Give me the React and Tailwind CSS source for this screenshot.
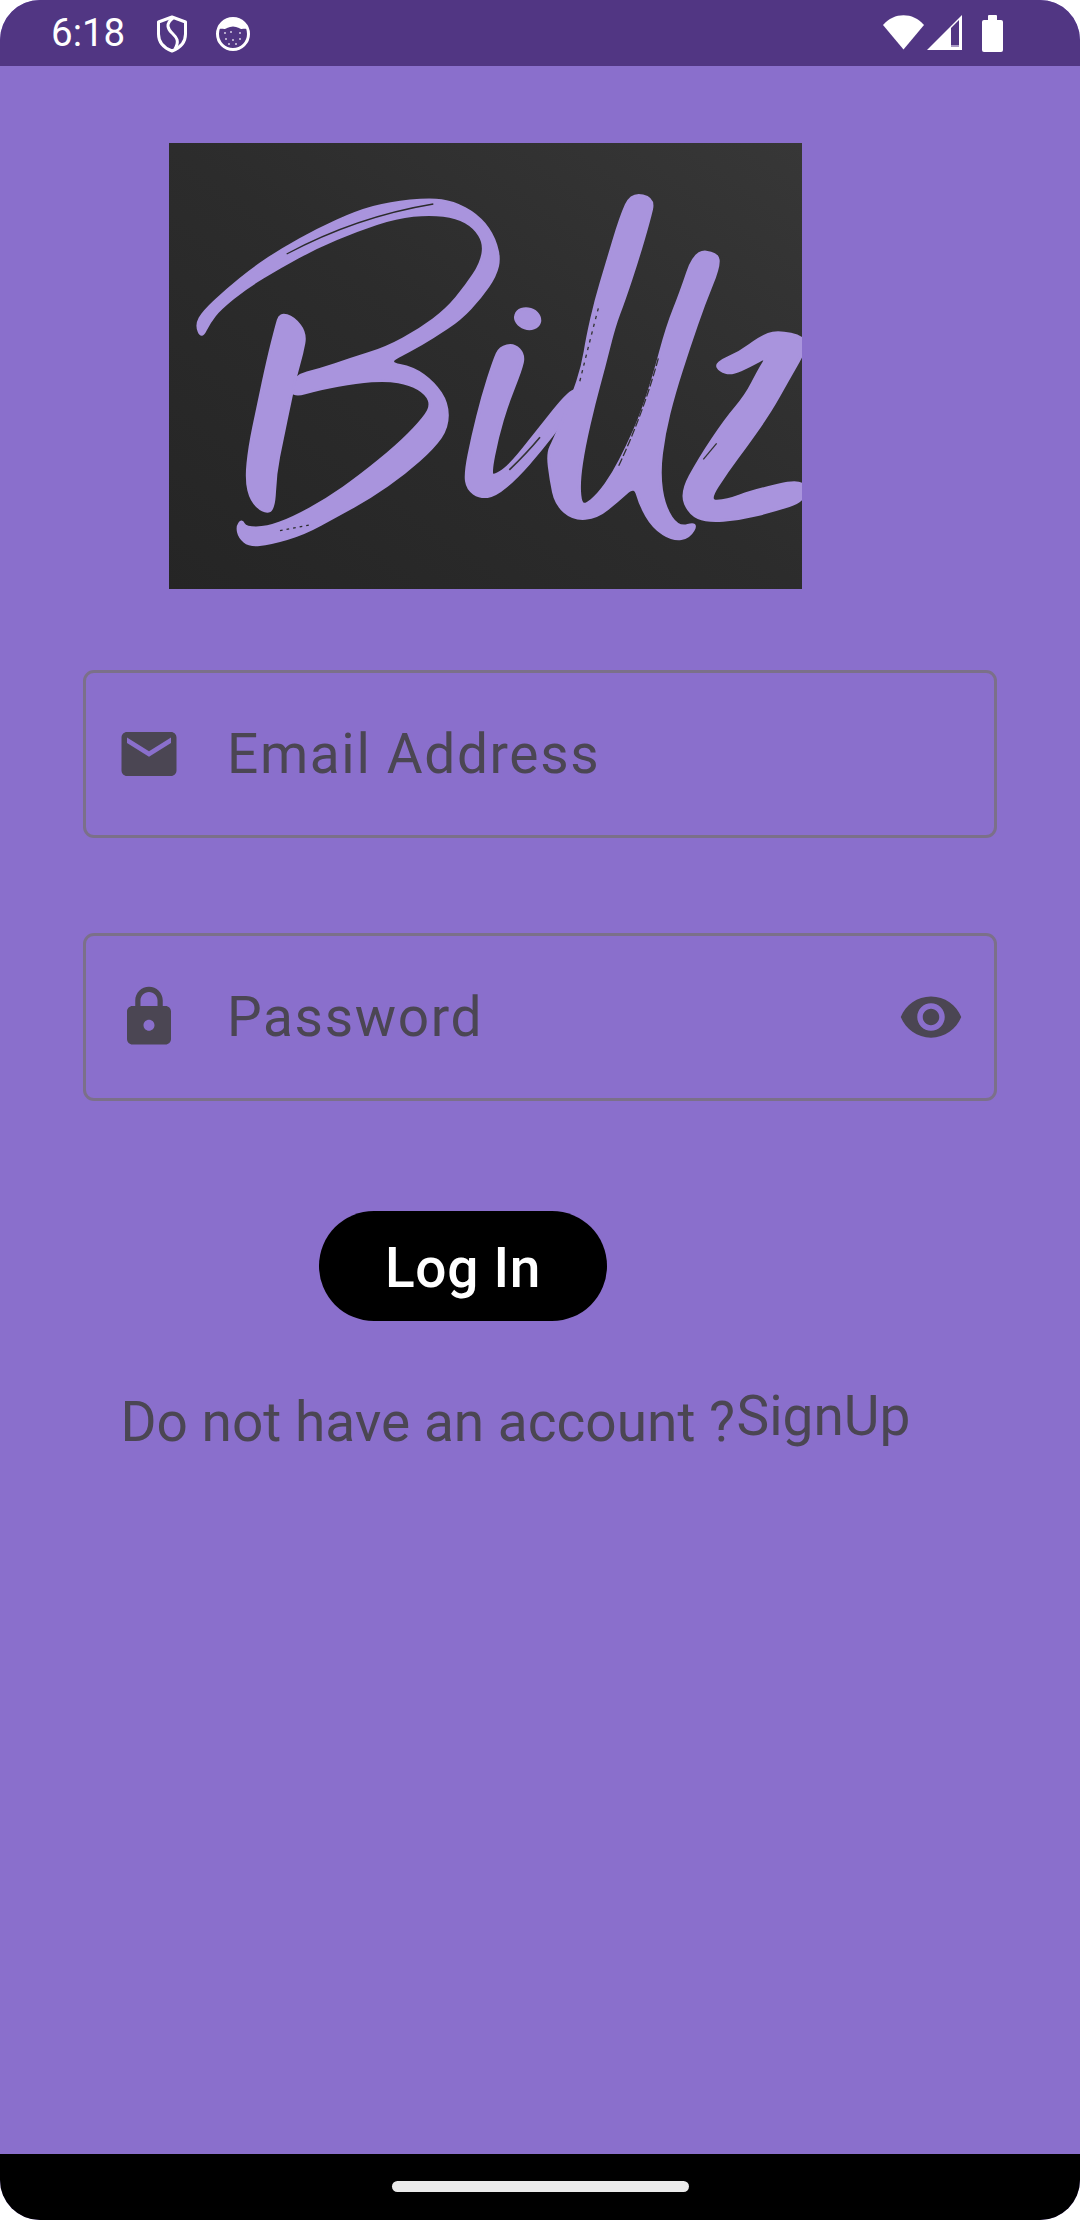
// Billz login screen
const roboto = "font-['Roboto',sans-serif]";

// smooth closed outline through points, used for the brush strokes of the logo
const blob = (pts) => {
  const mid = (a, b) => [(a[0] + b[0]) / 2, (a[1] + b[1]) / 2];
  const start = mid(pts[pts.length - 1], pts[0]);
  let d = `M${start[0]} ${start[1]}`;
  pts.forEach((p, i) => {
    const m = mid(p, pts[(i + 1) % pts.length]);
    d += ` Q${p[0]} ${p[1]} ${m[0]} ${m[1]}`;
  });
  return d + 'Z';
};

// B, in 3x units from x=170 y=180
const swoosh = [
  [95, 475], [78, 435], [100, 395], [170, 330], [250, 265], [340, 205], [440, 150], [560, 95], [660, 68], [780, 56],
  [850, 66], [920, 103], [967, 160], [990, 230], [977, 287], [932, 352], [872, 417], [790, 472], [720, 512], [650, 548],
  [730, 563], [792, 608], [833, 670], [833, 742], [792, 802], [702, 882], [602, 952], [502, 1007], [402, 1062], [300, 1092],
  [238, 1098], [208, 1072], [201, 1040], [215, 1020], [227, 1043], [290, 1043], [370, 1013], [470, 958], [570, 888], [680, 798],
  [750, 728], [784, 680], [770, 642], [720, 612], [650, 600], [560, 607], [450, 627], [360, 652], [372, 588], [450, 568],
  [540, 538], [650, 503], [750, 448], [830, 388], [888, 318], [933, 250], [943, 190], [913, 142], [860, 112], [780, 102],
  [680, 112], [560, 152], [440, 202], [330, 262], [230, 322], [150, 387], [118, 427],
];
const stem = [
  [330, 400], [372, 413], [408, 460], [397, 520], [377, 590], [362, 660], [337, 780], [317, 880], [312, 992], [280, 997],
  [243, 962], [228, 900], [238, 800], [263, 680], [293, 540], [318, 440],
];
// i, ll and z, in 3x units from x=440 y=180
const letterI = [
  [180, 503], [222, 493], [252, 525], [242, 570], [202, 670], [172, 770], [150, 883], [165, 888], [210, 858], [290, 758],
  [395, 625], [420, 640], [370, 722], [300, 812], [230, 892], [165, 947], [120, 952], [83, 927], [76, 880], [98, 770],
  [128, 650], [163, 540],
];
const letterLL = [
  [575, 40], [642, 56], [627, 120], [592, 240], [552, 360], [522, 440], [492, 560], [462, 670], [432, 800], [417, 900],
  [420, 965], [435, 977], [475, 945], [520, 882], [562, 800], [602, 710], [642, 590], [682, 440], [722, 340], [765, 213],
  [832, 220], [837, 260], [792, 370], [747, 500], [702, 640], [672, 760], [657, 880], [672, 980], [715, 1045], [772, 1028],
  [747, 1072], [700, 1080], [640, 1042], [600, 972], [585, 915], [532, 962], [472, 1012], [400, 1018], [348, 972], [333, 900],
  [323, 820], [343, 780], [398, 650], [428, 560], [443, 470], [468, 360], [498, 260], [543, 110],
];
const letterZ = [
  [828, 550], [900, 518], [960, 473], [1010, 453], [1095, 473], [1095, 510], [1042, 602], [992, 692], [922, 792], [862, 872],
  [802, 965], [860, 963], [940, 933], [1095, 897], [1095, 962], [1000, 992], [900, 1017], [800, 1024], [750, 1002], [723, 940],
  [778, 838], [858, 718], [918, 648], [958, 570], [985, 527], [930, 557], [875, 582], [840, 572],
];

const BillzLogo = () => (
  <div className="ml-[169px] mt-[77px] h-[446px] w-[633px] overflow-hidden bg-linear-to-tr from-[#252525] via-[#2c2c2c] to-[#373737]">
    <svg viewBox="169 143 633 446" className="h-full w-full blur-[0.5px]">
      <g transform="translate(170 180) scale(0.3333)">
        <g fill="#a994dd" stroke="#a994dd" strokeWidth="7" strokeLinejoin="round">
          <path d={blob(swoosh)} />
          <path d={blob(stem)} />
        </g>
        <path d="M350 222 Q560 110 790 72" fill="none" stroke="#2b2b2b" strokeWidth="4" />
        <path d="M330 1052 L420 1035" fill="none" stroke="#2b2b2b" strokeWidth="4" strokeDasharray="8 12" />
      </g>
      <g transform="translate(440 180) scale(0.3333)">
        <g fill="#a994dd" stroke="#a994dd" strokeWidth="9" strokeLinejoin="round">
          <ellipse cx="263" cy="416" rx="37" ry="29" transform="rotate(18 263 416)" />
          <path d={blob(letterI)} />
          <path d={blob(letterLL)} />
          <path d={blob(letterZ)} />
        </g>
        <g fill="none" stroke="#333333">
          <path d="M208 870 Q260 820 300 772" strokeWidth="5" />
          <path d="M475 385 Q450 480 418 610" strokeWidth="4" strokeDasharray="10 14" />
          <path d="M655 535 Q610 700 535 860" strokeWidth="4" strokeDasharray="24 8" />
          <path d="M790 838 L830 790" strokeWidth="4" />
        </g>
      </g>
    </svg>
  </div>
);

const StatusBar = () => (
  <div className="relative flex h-[66px] shrink-0 items-center bg-[#513683] text-white">
    <span className={`${roboto} ml-[51px] w-[105px] pt-[1px] text-[38.5px] leading-none`}>6:18</span>
    <svg width="32" height="38" viewBox="0 0 32 38" fill="none" stroke="white" className="mt-[1px]">
      <path d="M16 2 L29.5 7 V19 C29.5 27 24 33 16 36 C8 33 2.5 27 2.5 19 V7 Z" strokeWidth="3" strokeLinejoin="round" />
      <path d="M17 3 C9 9 12 14 16 18 C20 22 24 25 19 34" strokeWidth="3" />
    </svg>
    <svg width="36" height="36" viewBox="0 0 36 36" className="ml-[27px] mt-[1px]">
      <circle cx="18" cy="18" r="15.5" fill="none" stroke="white" strokeWidth="3" />
      <path d="M4 13 L8 6 C12 2 24 2 28 6 L32 13 C28 12 27 14 24 12 C20 10 16 10 12 12 C9 14 8 12 4 13 Z" fill="white" />
      <g fill="white" opacity="0.75">
        <circle cx="10" cy="17" r="1" />
        <circle cx="16" cy="16" r="1" />
        <circle cx="25" cy="17" r="1" />
        <circle cx="11" cy="23" r="1" />
        <circle cx="18" cy="24" r="1" />
        <circle cx="25" cy="23" r="1" />
        <circle cx="14" cy="28" r="1" />
        <circle cx="21" cy="28" r="1" />
      </g>
    </svg>
    <div className="ml-auto mr-[77px] flex items-center">
      <svg width="41" height="36" viewBox="0 0 41 36">
        <path d="M0 10 C11 -3 30 -3 41 10 L20.5 34.5 Z" fill="white" />
      </svg>
      <svg width="36" height="36" viewBox="0 0 36 36" className="ml-[3px]">
        <path d="M0 35 L35 0 V35 Z" fill="white" />
        <path d="M24 13 L32 5 V32 H24 Z" fill="#513683" />
        <path d="M24 30 H32 V32 H24 Z" fill="#a899c4" />
      </svg>
      <div className="ml-[19px] flex flex-col items-center">
        <div className="h-[5px] w-[9px] rounded-t-[1px] bg-white" />
        <div className="h-[32px] w-[21px] rounded-[2px] bg-white" />
      </div>
    </div>
  </div>
);

const Field = ({ icon, label, trailing, className }) => (
  <div className={`ml-[83px] flex h-[168px] w-[914px] items-center rounded-[11px] border-[3px] border-[#7b7089] ${className}`}>
    <svg width="66" height="66" viewBox="0 0 24 24" fill="#4b4653" className="ml-[30px] shrink-0">
      <path d={icon} />
    </svg>
    <span className={`${roboto} ml-[45px] text-[55px] leading-none tracking-[1.65px] text-[#4b4653]`}>{label}</span>
    {trailing}
  </div>
);

export default function App() {
  return (
    <div className="flex h-[2220px] w-[1080px] flex-col overflow-hidden rounded-[40px] bg-[#8a6fcc]">
      <StatusBar />

      <main className="flex-1">
        <BillzLogo />

        <Field
          className="mt-[81px]"
          label="Email Address"
          icon="M20 4H4c-1.1 0-1.99.9-1.99 2L2 18c0 1.1.9 2 2 2h16c1.1 0 2-.9 2-2V6c0-1.1-.9-2-2-2zm0 4l-8 5-8-5V6l8 5 8-5v2z"
        />
        <Field
          className="mt-[95px]"
          label="Password"
          icon="M18 8h-1V6c0-2.76-2.24-5-5-5S7 3.24 7 6v2H6c-1.1 0-2 .9-2 2v10c0 1.1.9 2 2 2h12c1.1 0 2-.9 2-2V10c0-1.1-.9-2-2-2zm-6 9c-1.1 0-2-.9-2-2s.9-2 2-2 2 .9 2 2-.9 2-2 2zm3.1-9H8.9V6c0-1.71 1.39-3.1 3.1-3.1 1.71 0 3.1 1.39 3.1 3.1v2z"
          trailing={
            <svg width="66" height="66" viewBox="0 0 24 24" fill="#4b4653" className="ml-auto mr-[30px] shrink-0">
              <path d="M12 4.5C7 4.5 2.73 7.61 1 12c1.73 4.39 6 7.5 11 7.5s9.27-3.11 11-7.5c-1.73-4.39-6-7.5-11-7.5zM12 17c-2.76 0-5-2.24-5-5s2.24-5 5-5 5 2.24 5 5-2.24 5-5 5zm0-8c-1.66 0-3 1.34-3 3s1.34 3 3 3 3-1.34 3-3-1.34-3-3-3z" />
            </svg>
          }
        />

        <button className={`${roboto} ml-[319px] mt-[110px] block h-[110px] w-[288px] rounded-full bg-black pt-[4px] text-[55px] font-medium leading-none tracking-[0.7px] text-white`}>
          Log In
        </button>

        <div className={`${roboto} ml-[120.5px] mt-[68px] flex items-start text-[55px] leading-none text-[#4b4653]`}>
          <span className="mt-[6px]">Do not have an account ?</span>
          <span className="ml-[1.5px]">SignUp</span>
        </div>
      </main>

      <div className="flex h-[66px] shrink-0 items-start justify-center bg-black pt-[27px]">
        <div className="h-[11px] w-[297px] rounded-full bg-[#eaeaea]" />
      </div>
    </div>
  );
}
